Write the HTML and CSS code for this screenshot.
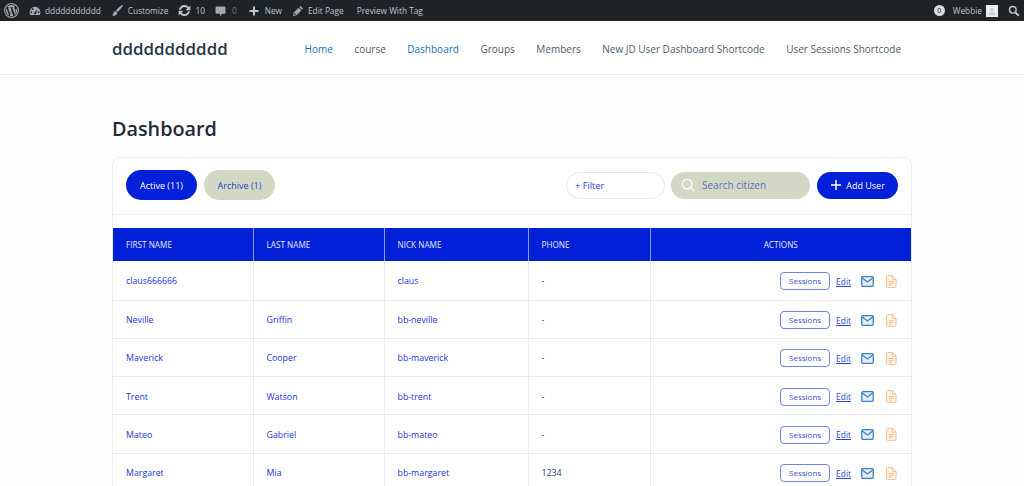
FILE: index.html
```html
<!DOCTYPE html>
<html lang="en">
<head>
  <meta charset="UTF-8">
  <meta name="viewport" content="width=device-width, initial-scale=1.0">
  <title>Dashboard</title>
  <link rel="stylesheet" href="styles.css">
</head>
<body>
  <!-- Admin bar -->
  <div class="adminbar">
    <div class="adminbar-group">
      <span class="ab-item ab-logo">
        <svg width="15" height="15" viewBox="0 0 20 20"><circle cx="10" cy="10" r="9.2" fill="none" stroke="#a7aaad" stroke-width="1.4"/><path d="M2.6 10c0 3 1.7 5.500 4.200 6.700L3.300 7a7.400 7.400 0 0 0-.7 3zm12.400-.4c0-.9-.3-1.600-.6-2.100-.4-.6-.7-1.100-.7-1.700 0-.7.500-1.300 1.200-1.300h.1A7.400 7.400 0 0 0 3.800 5.900h.5c.8 0 2-.1 2-.1.4 0 .5.600.1.600 0 0-.4.100-.9.100l2.800 8.300 1.700-5-1.200-3.300c-.4 0-.8-.1-.8-.1-.4 0-.4-.6 0-.6 0 0 1.300.1 2 .1.800 0 2-.1 2-.1.400 0 .5.600.1.600 0 0-.4.100-.9.100l2.800 8.200.8-2.600c.3-1 .6-1.800.6-2.500zM10.100 10.700l-2.300 6.700a7.400 7.400 0 0 0 4.500-.1l-2.200-6.600zm6.600-4.300c0 .3.100.6.100.9 0 .8-.1 1.600-.6 2.800l-2.300 6.600A7.400 7.400 0 0 0 16.700 6.400z" fill="#a7aaad"/></svg>
      </span>
      <span class="ab-item">
        <svg width="12" height="12" viewBox="0 0 20 20"><path d="M10 3a9 9 0 0 0-9 9c0 1.700.5 3.300 1.300 4.700h15.400A9 9 0 0 0 19 12a9 9 0 0 0-9-9zm-6 10.500a1.500 1.500 0 1 1 0-3 1.500 1.500 0 0 1 0 3zm2-5a1.500 1.500 0 1 1 0-3 1.500 1.500 0 0 1 0 3zm5.500 6.500a1.800 1.800 0 0 1-3-1.800L13.500 7l-1.300 6.200c.1 0 0 1.300-.7 1.800zM16 13.500a1.500 1.500 0 1 1 0-3 1.500 1.500 0 0 1 0 3z" fill="#a7aaad"/></svg>
        ddddddddddd
      </span>
      <span class="ab-item">
        <svg width="13" height="13" viewBox="0 0 20 20"><path d="M18.300 1.700c-1-.8-7.500 4.500-10.500 8.200l2.500 2.300c3.500-3.200 8.900-9.500 8-10.500zM7 11c-2.300.2-3 1.900-3.300 3.500-.2 1.200-1 2-2.700 2.500 3 1.700 7.500 1.500 8.500-3 .1-.5 0-1-.1-1.200L7 11z" fill="#a7aaad"/></svg>
        Customize
      </span>
      <span class="ab-item">
        <svg width="13" height="13" viewBox="0 0 20 20"><path d="M10 4.500c-2.600 0-4.800 1.800-5.400 4.300H1.500C2.200 4.700 5.700 1.500 10 1.500c2.700 0 5 1.200 6.600 3.200L19 2.500v7h-7l2.500-2.800A5.500 5.500 0 0 0 10 4.500zM10 15.500c2.600 0 4.800-1.800 5.400-4.300h3.100c-.7 4.100-4.200 7.300-8.500 7.300-2.700 0-5-1.200-6.600-3.200L1 17.500v-7h7l-2.500 2.800a5.500 5.500 0 0 0 4.500 2.200z" fill="#c3c4c7"/></svg>
        10
      </span>
      <span class="ab-item ab-muted">
        <svg class="ab-gap" width="11" height="12" viewBox="0 0 20 20"><path d="M3 2h14a2 2 0 0 1 2 2v9a2 2 0 0 1-2 2h-4l-4 4.500V15H3a2 2 0 0 1-2-2V4a2 2 0 0 1 2-2z" fill="#a7aaad"/></svg>
        0
      </span>
      <span class="ab-item">
        <svg class="ab-gap" width="10" height="10" viewBox="0 0 20 20"><path d="M8 1h4v7h7v4h-7v7H8v-7H1V8h7z" fill="#c3c4c7"/></svg>
        New
      </span>
      <span class="ab-item">
        <svg width="12" height="12" viewBox="0 0 20 20"><path d="M14 1.500l4.500 4.500-2 2L12 3.500zM11 4.500L15.500 9l-8 8L1.500 18.500 3 12.500zM4.500 13l-1 3.500 3.500-1z" fill="#a7aaad" fill-rule="evenodd"/></svg>
        Edit Page
      </span>
      <span class="ab-item ab-preview">Preview With Tag</span>
    </div>
    <div class="adminbar-group">
      <span class="ab-item ab-item-tight"><span class="ab-badge">0</span></span>
      <span class="ab-item ab-user">
        Webbie
        <svg width="12" height="12" viewBox="0 0 13 13"><rect width="13" height="13" fill="#eceef0"/><circle cx="6.500" cy="5" r="2" fill="#c9ced3"/><path d="M2.500 11c.4-2.500 2-3.300 4-3.300s3.600.8 4 3.300z" fill="#c9ced3"/></svg>
      </span>
      <span class="ab-item ab-search">
        <svg width="12" height="12" viewBox="0 0 20 20"><circle cx="8" cy="8" r="5.500" fill="none" stroke="#c3c4c7" stroke-width="2.400"/><path d="M12 12l6 6" stroke="#c3c4c7" stroke-width="3.200"/></svg>
      </span>
    </div>
  </div>

  <!-- Site header -->
  <header class="site-header">
    <div class="container header-inner">
      <div class="site-title">ddddddddddd</div>
      <nav class="site-nav">
        <a class="nav-link nav-current">Home</a>
        <a class="nav-link">course</a>
        <a class="nav-link nav-current">Dashboard</a>
        <a class="nav-link">Groups</a>
        <a class="nav-link">Members</a>
        <a class="nav-link">New JD User Dashboard Shortcode</a>
        <a class="nav-link">User Sessions Shortcode</a>
      </nav>
    </div>
  </header>

  <main class="page">
    <div class="container">
      <h1 class="page-title">Dashboard</h1>

      <div class="card">
        <div class="toolbar">
          <div class="toolbar-group">
            <button class="pill pill-active">Active (11)</button>
            <button class="pill pill-muted">Archive (1)</button>
          </div>
          <div class="toolbar-group toolbar-right">
            <div class="filter">+ Filter</div>
            <div class="search">
              <svg width="14" height="14" viewBox="0 0 16 16"><circle cx="7" cy="7" r="5.500" fill="none" stroke="#fff" stroke-width="1.400"/><path d="M11 11l3.600 3.600" stroke="#fff" stroke-width="1.400"/></svg>
              Search citizen
            </div>
            <button class="add-user">
              <svg width="12" height="12" viewBox="0 0 12 12"><path d="M6 1v10M1 6h10" stroke="#fff" stroke-width="1.500"/></svg>
              Add User
            </button>
          </div>
        </div>

        <table class="users">
          <thead>
            <tr>
              <th class="col-first">First Name</th>
              <th class="col-last">Last Name</th>
              <th class="col-nick">Nick Name</th>
              <th class="col-phone">Phone</th>
              <th class="col-actions">Actions</th>
            </tr>
          </thead>
          <tbody id="rows"></tbody>
        </table>
      </div>
    </div>
  </main>

  <script>
    // Table rows
    const users = [
      ['claus666666', '', 'claus', '-'],
      ['Neville', 'Griffin', 'bb-neville', '-'],
      ['Maverick', 'Cooper', 'bb-maverick', '-'],
      ['Trent', 'Watson', 'bb-trent', '-'],
      ['Mateo', 'Gabriel', 'bb-mateo', '-'],
      ['Margaret', 'Mia', 'bb-margaret', '1234']
    ];
    const mailIcon = '<svg class="icon-mail" width="13" height="11" viewBox="0 0 14 12"><rect x=".75" y=".75" width="12.500" height="10.500" rx="1.200" fill="#e3eef8" stroke="#3b82c4" stroke-width="1.400"/><path d="M1 2l6 4.500L13 2" fill="none" stroke="#3b82c4" stroke-width="1.400"/></svg>';
    const docIcon = '<svg width="11" height="13" viewBox="0 0 11 13"><path d="M1.500.6h5l3.500 3.500v7a1.300 1.300 0 0 1-1.300 1.300H1.500A1 1 0 0 1 .6 11.400V1.600a1 1 0 0 1 .9-1zM6.300.8v3.500h3.500M2.800 6.500h5M2.800 8.300h5M2.800 10.100h3" fill="#fef4ea" stroke="#f6bd8a" stroke-width="1"/></svg>';
    document.getElementById('rows').innerHTML = users.map(u => `
      <tr>
        <td><a class="cell-link">${u[0]}</a></td>
        <td><a class="cell-link">${u[1]}</a></td>
        <td><a class="cell-link">${u[2]}</a></td>
        <td class="cell-phone">${u[3]}</td>
        <td class="cell-actions">
          <div class="actions">
            <a class="btn-sessions">Sessions</a>
            <a class="link-edit">Edit</a>
            ${mailIcon}
            ${docIcon}
          </div>
        </td>
      </tr>`).join('');
  </script>
</body>
</html>
```

FILE: styles.css
```css
/* Global Styles */
body {
  margin: 0;
  font-family: 'Open Sans', 'Noto Sans', sans-serif;
  background-color: #fefefe;
  color: #1f2b3a;
}
.container {
  width: 800px;
  margin: 0 auto;
}
button {
  font-family: inherit;
  border: none;
  cursor: pointer;
}

/* Admin bar */
.adminbar {
  display: flex;
  justify-content: space-between;
  height: 21px;
  background-color: #1d2327;
  color: #c3c4c7;
  font-size: 8.300px;
}
.adminbar-group {
  display: flex;
  align-items: center;
}
.ab-item {
  display: flex;
  align-items: center;
  gap: 4px;
  padding: 0 5px;
  white-space: nowrap;
}
.ab-logo {
  padding: 0 5px 0 4px;
}
.ab-muted {
  padding-right: 7px;
  color: #787c82;
}
.ab-gap {
  margin-right: 2px;
}
.ab-preview {
  padding-left: 8px;
}
.ab-item-tight {
  padding: 0 3px;
}
.ab-badge {
  display: block;
  width: 11px;
  height: 11px;
  border-radius: 50%;
  background-color: #dcdcde;
  color: #1d2327;
  font-size: 7px;
  line-height: 11px;
  text-align: center;
}
.ab-search {
  padding: 0 4px 0 5px;
}

/* Site header */
.site-header {
  height: 53px;
  background-color: #fff;
  border-bottom: 1px solid #e7e9eb;
}
.header-inner {
  display: flex;
  justify-content: space-between;
  align-items: center;
  box-sizing: border-box;
  height: 100%;
  padding-top: 2px;
}
.site-title {
  font-size: 16.900px;
  font-weight: 600;
  color: #2a3646;
}
.site-nav {
  display: flex;
  gap: 21.500px;
  padding-right: 11px;
  font-size: 10px;
  color: #505a68;
}
.nav-current {
  color: #2271b8;
}

/* Main */
.page {
  height: 411px;
  overflow: hidden;
}
.page-title {
  margin: 42px 0 16px;
  font-size: 19.800px;
  line-height: 24px;
  font-weight: 600;
  color: #1f2b3a;
}
.card {
  height: 400px;
  background-color: #fff;
  border: 1px solid #eceef0;
  border-radius: 8px;
}

/* Toolbar */
.toolbar {
  display: flex;
  justify-content: space-between;
  align-items: center;
  box-sizing: border-box;
  height: 57px;
  padding: 0 13px 2px;
  border-bottom: 1px solid #eceef0;
}
.toolbar-group {
  display: flex;
  align-items: center;
  gap: 7px;
}
.toolbar-right {
  gap: 6px;
}
.pill {
  width: 71px;
  height: 30px;
  border-radius: 15px;
  font-size: 9px;
}
.pill-active {
  background-color: #0220d8;
  color: #fff;
}
.pill-muted {
  background-color: #d2d8c4;
  color: #2a45c8;
}
.filter {
  box-sizing: border-box;
  width: 99px;
  height: 27px;
  padding-left: 8px;
  border: 1px solid #e5e7eb;
  border-radius: 14px;
  color: #1e3ad0;
  font-size: 9.200px;
  line-height: 25px;
}
.search {
  display: flex;
  align-items: center;
  gap: 7px;
  box-sizing: border-box;
  width: 139px;
  height: 27px;
  padding-left: 10px;
  border-radius: 14px;
  background-color: #d2d8c4;
  color: #5a6fc6;
  font-size: 10px;
}
.add-user {
  display: flex;
  align-items: center;
  justify-content: center;
  gap: 4px;
  width: 81px;
  height: 27px;
  margin-left: 1px;
  padding: 0;
  border-radius: 14px;
  background-color: #0220d8;
  color: #fff;
  font-size: 9px;
}

/* Table */
.users {
  width: 100%;
  margin-top: 13px;
  border-collapse: collapse;
  table-layout: fixed;
  font-size: 8.800px;
}
.users th, .users td {
  box-sizing: border-box;
  padding: 0 13px;
}
.users th {
  height: 33px;
  background-color: #0220d8;
  border-left: 1px solid #8c9bea;
  color: #e6e9fb;
  font-size: 8.200px;
  font-weight: 400;
  text-align: left;
  text-transform: uppercase;
}
.users th:first-child, .users td:first-child {
  border-left: none;
}
.users td {
  height: 38.250px;
  padding-top: 2px;
  border-left: 1px solid #e8eaed;
  border-bottom: 1px solid #e8eaed;
}
.users tbody tr:first-child td {
  height: 39px;
}
.users .col-actions {
  text-align: center;
}
.col-first { width: 140px; }
.col-last { width: 131px; }
.col-nick { width: 144px; }
.col-phone { width: 122px; }
.cell-link {
  color: #1a35d2;
}
.cell-phone {
  color: #2a3c80;
}
.actions {
  display: flex;
  justify-content: flex-end;
  align-items: center;
  gap: 10px;
  padding-right: 1px;
}
.btn-sessions {
  box-sizing: border-box;
  width: 50px;
  height: 18px;
  border: 1px solid #6f82ee;
  border-radius: 4px;
  color: #3a52d8;
  font-size: 8px;
  line-height: 16px;
  text-align: center;
}
.link-edit {
  margin-left: -4px;
  color: #2a45d4;
  font-size: 8.400px;
  text-decoration: underline;
}
.icon-mail {
  margin-right: 2px;
}
```
